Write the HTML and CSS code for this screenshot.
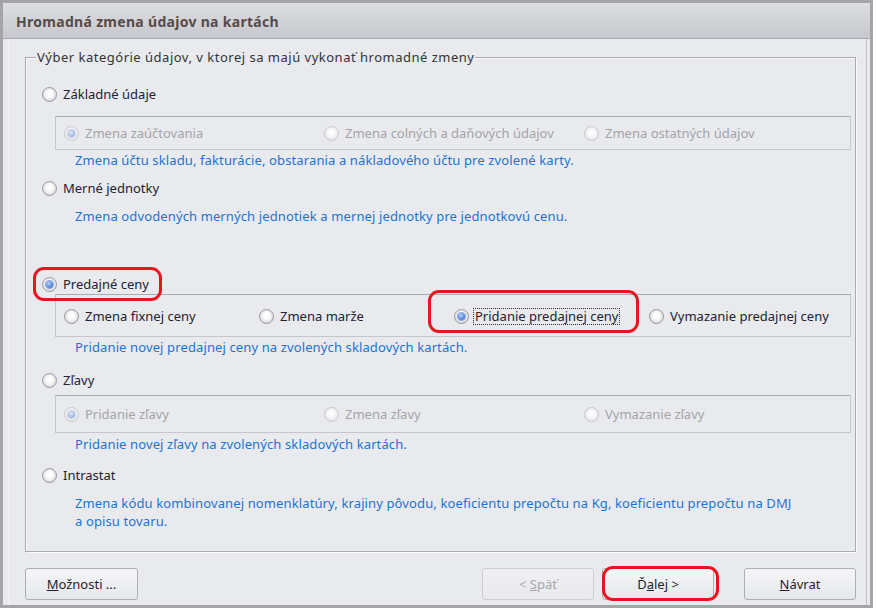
FILE: index.html
```html
<!DOCTYPE html>
<html lang="sk">
<head>
<meta charset="utf-8">
<title>Hromadná zmena údajov na kartách</title>
<link rel="stylesheet" href="styles.css">
</head>
<body>
<div class="window">
  <div class="titlebar">Hromadná zmena údajov na kartách</div>
  <div class="panel">
    <div class="group">
      <div class="legend">Výber kategórie údajov, v ktorej sa majú vykonať hromadné zmeny</div>

      <div class="opt main r-zakl"><span class="radio"></span>Základné údaje</div>
      <div class="sub sub-zakl cols3">
        <div class="opt dis"><span class="radio on"></span>Zmena zaúčtovania</div>
        <div class="opt dis"><span class="radio"></span>Zmena colných a daňových údajov</div>
        <div class="opt dis"><span class="radio"></span>Zmena ostatných údajov</div>
      </div>
      <div class="desc">Zmena účtu skladu, fakturácie, obstarania a nákladového účtu pre zvolené karty.</div>

      <div class="opt main r-merne"><span class="radio"></span>Merné jednotky</div>
      <div class="desc d-merne">Zmena odvodených merných jednotiek a mernej jednotky pre jednotkovú cenu.</div>

      <div class="opt main r-pred"><span class="radio on"></span>Predajné ceny</div>
      <div class="sub sub-pred cols4">
        <div class="opt"><span class="radio"></span>Zmena fixnej ceny</div>
        <div class="opt"><span class="radio"></span>Zmena marže</div>
        <div class="opt"><span class="radio on"></span><span class="focus">Pridanie predajnej ceny</span></div>
        <div class="opt"><span class="radio"></span>Vymazanie predajnej ceny</div>
      </div>
      <div class="desc">Pridanie novej predajnej ceny na zvolených skladových kartách.</div>

      <div class="opt main r-zlavy"><span class="radio"></span>Zľavy</div>
      <div class="sub sub-zlavy cols3">
        <div class="opt dis"><span class="radio on"></span>Pridanie zľavy</div>
        <div class="opt dis"><span class="radio"></span>Zmena zľavy</div>
        <div class="opt dis"><span class="radio"></span>Vymazanie zľavy</div>
      </div>
      <div class="desc d-zlavy">Pridanie novej zľavy na zvolených skladových kartách.</div>

      <div class="opt main r-intra"><span class="radio"></span>Intrastat</div>
      <div class="desc d-intra">Zmena kódu kombinovanej nomenklatúry, krajiny pôvodu, koeficientu prepočtu na Kg, koeficientu prepočtu na DMJ<br>a opisu tovaru.</div>
    </div>

    <div class="buttons">
      <button class="btn btn-wide"><u>M</u>ožnosti ...</button>
      <span class="spacer"></span>
      <button class="btn disabled">&lt; <u>S</u>päť</button>
      <button class="btn">Ď<u>a</u>lej &gt;</button>
      <button class="btn btn-last"><u>N</u>ávrat</button>
    </div>
  </div>
</div>

<div class="mark mark-pred"></div>
<div class="mark mark-prid"></div>
<div class="mark mark-dalej"></div>
</body>
</html>
```

FILE: styles.css
```css
* { box-sizing: border-box; }

html, body {
  margin: 0;
  padding: 0;
  background: #ffffff;
}

body {
  position: relative;
  width: 876px;
  height: 613px;
  overflow: hidden;
  font-family: "Noto Sans", "Open Sans", "DejaVu Sans", sans-serif;
  font-size: 13px;
  color: #222234;
}

.window {
  width: 873px;
  height: 608px;
  border: 3px solid #a5a5a8;
  background: #e9eaee;
  display: flex;
  flex-direction: column;
}

.titlebar {
  height: 36px;
  flex: none;
  border-bottom: 1px solid #a9aab3;
  background: linear-gradient(#dddee2, #c7c8cd);
  color: #574b48;
  font-weight: bold;
  font-size: 14px;
  letter-spacing: 0.3px;
  line-height: 30px;
  padding: 4px 0 0 13px;
}

.panel {
  flex: 1;
  margin: 0 3px 0 5px;
  border-left: 1px solid #f4f4f6;
  border-right: 1px solid #c4c5cb;
  padding: 18px 10px 0 16px;
  display: flex;
  flex-direction: column;
}

.group {
  border: 1px solid #a8a9b1;
  box-shadow: 1px 1px 0 #fbfbfc, inset 1px 1px 0 #fbfbfc;
  padding: 0 4px 21px 16px;
  display: flex;
  flex-direction: column;
  align-items: flex-start;
}

.legend {
  margin: -9px 0 0 -6px;
  padding: 0 1px;
  line-height: 16px;
  background: #e9eaee;
  color: #333338;
  letter-spacing: 0.5px;
}

.opt {
  display: flex;
  align-items: center;
  height: 20px;
  white-space: nowrap;
}

.opt.dis { color: #a4a4aa; }

.radio {
  position: relative;
  flex: none;
  width: 15px;
  height: 15px;
  margin-right: 6px;
  border-radius: 50%;
  border: 1px solid #999a9f;
  background: radial-gradient(circle at 50% 45%, #ffffff 0, #fafafa 35%, #dcdce0 70%, #c6c6cb 100%);
}

.radio.on::after {
  content: "";
  position: absolute;
  left: 3px;
  top: 3px;
  width: 7px;
  height: 7px;
  border-radius: 50%;
  background: radial-gradient(circle at 40% 35%, #b9d3f7 0, #5d8ee0 55%, #2c5dbf 100%);
  box-shadow: 0 0 0 1px #8aa9de;
}

.dis .radio {
  border-color: #c9cacf;
  background: radial-gradient(circle at 50% 45%, #ffffff 0, #f7f7f8 40%, #e4e4e8 75%, #d6d6da 100%);
}

.dis .radio.on::after {
  background: radial-gradient(circle at 40% 35%, #dfe7f6 0, #a9bde4 60%, #96ace0 100%);
  box-shadow: 0 0 0 1px #c2cfea;
}

.r-zakl { margin-top: 19px; }
.r-merne { margin-top: 8px; }
.r-pred { margin-top: 48px; }
.r-zlavy { margin-top: 13px; }
.r-intra { margin-top: 11px; }

.sub {
  align-self: stretch;
  margin-left: 13px;
  border: 1px solid #c6c7cd;
  border-top-color: #a9aab2;
  display: grid;
  padding-left: 8px;
  padding-right: 6px;
}

.cols3 { grid-template-columns: repeat(3, 1fr); }
.cols4 { grid-template-columns: repeat(4, 1fr); }

.sub-zakl { margin-top: 12px; padding-top: 6px; padding-bottom: 6px; }
.sub-pred { margin-top: 0; padding-top: 11px; padding-bottom: 10px; }
.sub-zlavy { margin-top: 5px; padding-top: 8px; padding-bottom: 8px; }

.focus {
  border: 1px dotted #303036;
  padding: 0 1px;
  margin-left: -2px;
  line-height: 15px;
}

.desc {
  margin-left: 33px;
  line-height: 20px;
  color: #1b74d4;
  white-space: nowrap;
  letter-spacing: 0.12px;
}

.d-merne { margin-top: 8px; }
.d-zlavy { margin-top: 1px; }
.d-intra { margin-top: 9px; line-height: 18px; }

.buttons {
  margin-top: 16px;
  display: flex;
  align-items: center;
}

.spacer { flex: 1; }

.btn {
  width: 112px;
  height: 32px;
  margin: 0 0 0 8px;
  padding: 0;
  border: 1px solid #aeafb6;
  border-radius: 3px;
  background: linear-gradient(#f6f6f8, #e6e7eb);
  font-family: inherit;
  font-size: 13px;
  color: #1f1f2c;
}

.btn-wide { width: 113px; margin-left: 0; }
.btn-last { margin-left: 30px; }

.btn.disabled {
  color: #a6a6ac;
  border-color: #cdced3;
  background: linear-gradient(#f0f0f3, #e8e9ed);
}

.mark {
  position: absolute;
  border: 3px solid #e8151e;
  border-radius: 11px;
}

.mark-pred { left: 33px; top: 267px; width: 129px; height: 34px; }
.mark-prid { left: 428px; top: 290px; width: 211px; height: 43px; }
.mark-dalej { left: 602px; top: 566px; width: 117px; height: 35px; }
```
